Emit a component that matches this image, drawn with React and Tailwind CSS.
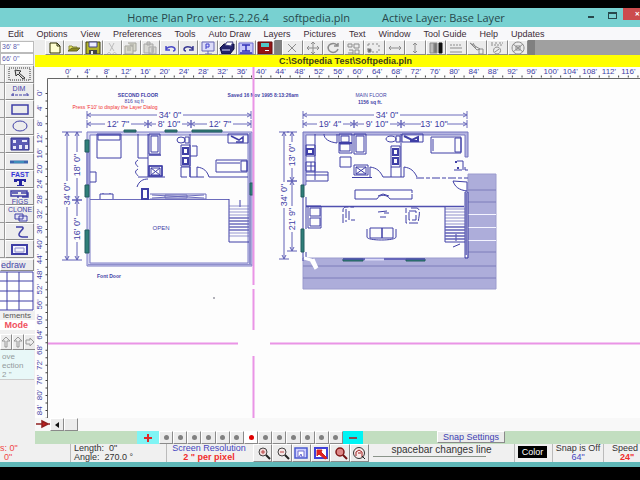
import clsx from 'clsx';

const INK = '#3f3fa6';
const GREEN = '#2f7f78';

const menus = ['Edit', 'Options', 'View', 'Preferences', 'Tools', 'Auto Draw', 'Layers', 'Pictures', 'Text', 'Window', 'Tool Guide', 'Help', 'Updates'];

const range = (n) => Array.from({ length: n }, (_, i) => i);

const fileTools = [
  { name: 'New', art: <path d="M3 2h7l3 3v7H3zM10 2v3h3" fill="#ffffd0" stroke="#333300" /> },
  { name: 'Open', art: <><path d="M3 10V5h3l1 1h4v2" fill="#e8e860" stroke="#8c8c3a" /><path d="M2 10l4-3h8l-3 3z" fill="#8c8c20" stroke="#66662a" /></> },
  { name: 'Save', art: <><path d="M1 1h14v12H1z" fill="#b4b428" stroke="#444410" /><path d="M4 1h8v5H4z" fill="#eeeeff" stroke="#44448a" /><path d="M4 9h8v4H4z" fill="#444" /><path d="M6 10h2v3H6z" fill="#eee" /></> },
  { name: 'Cut', art: <path d="M5 2l5 8M10 2L6 10M5 11.500a1.500 1.500 0 1 0 .1 0M10.500 11.500a1.500 1.500 0 1 0 .1 0" fill="none" stroke="#bcbcbc" /> },
  { name: 'Copy', art: <path d="M2 5h8v8H2zM5 2h8v8h-3M4 7h4M4 9h4M7 4h4" fill="#d8d8cc" stroke="#a4a49c" /> },
  { name: 'Paste', art: <path d="M2 3h9v9H2zM5 1h3v3H5zM7 6h7v7H7zM9 8h3M9 10h3" fill="#d8d8d4" stroke="#a8a8a8" /> },
  { name: 'Undo', art: <path d="M4 5v4h4M4 8c3-3 8-3 9 0 0 1-1 2-2 2" fill="none" stroke="#4a4ac8" strokeWidth="1.500" /> },
  { name: 'Redo', art: <path d="M12 5v4H8M12 8C9 5 4 5 3 8c0 1 1 2 2 2" fill="none" stroke="#3a3a94" strokeWidth="1.500" /> },
  { name: 'Preview', art: <><path d="M2 1h12v9H2zM5 13h7M8 10v3" fill="#dcdcf8" stroke="#6868b4" /><path d="M6 8V3h3v3H6" fill="none" stroke="#3c3ccc" /></> },
  { name: 'Print', art: <><path d="M1 7l4-4h10v5l-4 5H3z" fill="#22226c" stroke="#10103c" /><path d="M6 4l2-3h6l-2 4z" fill="#fff" stroke="#444488" /><path d="M3 9h8" stroke="#d8d8ff" /></> },
  { name: 'Layers', art: <><path d="M1 2h14v11H1z" fill="#c8c8fa" stroke="#6a6ad0" /><path d="M4 4h8M8 4v6M4 10h8M2 12h12" stroke="#3030b8" fill="none" strokeWidth="1.500" /></> },
  { name: 'Exit', art: <><path d="M1 1h14v12H1z" fill="#941414" stroke="#641010" /><path d="M4 2h8v4H4z" fill="#50c8c8" /><path d="M8 9h4v1H8z" fill="#fff" /></> },
];

const editTools = [
  { name: 'Delete', art: <path d="M4 3l8 8M12 3l-8 8" /> },
  { name: 'Move', art: <path d="M8 1v12M2 7h12M6 3l2-2 2 2M6 11l2 2 2-2M4 5L2 7l2 2M12 5l2 2-2 2" /> },
  { name: 'Rotate', art: <path d="M12 4a5 4.500 0 1 0 1 4M13 2v3H9" strokeWidth="1.500" /> },
  { name: 'Resize', art: <path d="M2 3h4v3H2zM8 3h5v4H8zM3 9h4v4M9 9h4v4H9zM2 12h5" /> },
  { name: 'Select', art: <><path d="M2 3h11v8H2z" strokeDasharray="2 2" /><path d="M2 8h3v3H2z" fill="#666" /></> },
  { name: 'Stretch width', art: <path d="M2 7h12M4 5L2 7l2 2M12 5l2 2-2 2" /> },
  { name: 'Stretch height', art: <path d="M8 2v10M6 4l2-2 2 2M6 10l2 2 2-2" /> },
  { name: 'Fill', art: <><path d="M2 2h4v10H2z" fill="#bbb" /><path d="M6 2h3v10H6z" fill="#777" /><path d="M11 2h3v10h-3z" fill="#111" stroke="#111" /></> },
  { name: 'Line style', art: <><path d="M2 4h12" strokeDasharray="2 1" /><path d="M2 7h12M2 11h12" /></> },
  { name: 'Trim', art: <path d="M1 2l5 3 5 3-3 1zM4 2l3 5M10 8h4v5h-4z" /> },
  { name: 'Check', art: <><path d="M2 2h3M6 2h3M10 2h4M2 4h12" strokeDasharray="2 1" /><path d="M8 6a3.500 3.500 0 1 0 .1 0M6 11l4-3" /></> },
  { name: 'Symbols', art: <path d="M8 1a6 6 0 1 0 .1 0M3 3l10 8M13 3L3 11M6 5h4v4H6z" /> },
];

const drawTools = [
  { name: 'Pointer', art: <><path d="M3 2h21v12H3z" fill="none" stroke="#333" strokeDasharray="1 1" /><path d="M9 4l6 1-2 2 6 5-2 1-5-5-2 2z" fill="#ddd" stroke="#333" /></> },
  { name: 'Dimension', art: <><text x="13" y="8" fontSize="7" textAnchor="middle" fill={INK}>DIM</text><path d="M5 12h18M7 10v4M21 10v4" stroke={INK} strokeDasharray="3 1" /></> },
  { name: 'Rectangle', art: <path d="M6 4h16v9H6z" fill="none" stroke={INK} strokeWidth="1.500" /> },
  { name: 'Circle', art: <ellipse cx="14" cy="8" rx="7" ry="5" fill="none" stroke={INK} /> },
  { name: 'Walls', art: <><path d="M5 2h18v12H5z" fill="#5a5ab4" stroke="#30308c" /><path d="M7 4h3v3H7zM16 4h5v2h-5zM7 10h3v3H7zM13 9h3v4h-3zM19 9h3v4h-3z" fill="#e8e8f8" /></> },
  { name: 'Line', art: <><path d="M4 8h18" stroke="#3c64ac" strokeWidth="3" /><path d="M8 8h10" stroke="#40b8c8" /></> },
  { name: 'Fast text', art: <><text x="14" y="6" fontSize="7" fontWeight="bold" textAnchor="middle" fill="#3434d8">FAST</text><path d="M8 8h12v3h-2V10h-2v4h2v1h-7v-1h2v-4h-2v1H8z" fill="#2424a0" /></> },
  { name: 'Figures', art: <><path d="M5 2h16v5H5zM12 7v2M6 4h6M15 4h7v4h-6" fill="none" stroke={INK} strokeWidth="1.500" /><text x="14" y="15" fontSize="7" textAnchor="middle" fill={INK}>FIGS</text></> },
  { name: 'Clone', art: <><text x="14" y="6" fontSize="7" textAnchor="middle" fill={INK}>CLONE</text><path d="M9 8h8v5H9zM13 10h8v5h-8z" fill="#e4e4f4" stroke={INK} /></> },
  { name: 'Curve', art: <path d="M10 3h6c4 1-4 5-3 8 1 3 5 2 9 2" fill="none" stroke={INK} strokeWidth="1.500" /> },
  { name: 'Frame', art: <><path d="M6 4h15v9H6z" fill="#f4f4fc" stroke={INK} strokeWidth="2" /><path d="M9 7h9v4H9z" fill="none" stroke="#8c8ccc" /></> },
];

const zoomTools = [
  { name: 'Zoom in', art: <><circle cx="8" cy="6" r="4" fill="#f0d8d8" stroke="#444" /><path d="M11 9l4 4" stroke="#222" strokeWidth="2" /><path d="M6 6h4M8 4v4" stroke="#b44" /></> },
  { name: 'Zoom out', art: <><circle cx="8" cy="6" r="4" fill="#f4e8e8" stroke="#444" /><path d="M11 9l4 4" stroke="#222" strokeWidth="2" /><path d="M6 6h4" stroke="#b44" /></> },
  { name: 'Zoom page', art: <><path d="M2 2h12v10H2z" fill="#d0d0ff" stroke="#4a5ad0" strokeWidth="1.500" /><path d="M5 5h6v6H9l-1-3-2 3H5z" fill="#fff" stroke="#7070d0" /></> },
  { name: 'Zoom area', art: <><path d="M2 2h12v10H2z" fill="#fff" stroke="#4040d8" strokeWidth="2" /><path d="M4 4h5l-1 2 6 6-2 1-6-5-2 2z" fill="#e02020" stroke="#d02020" /></> },
  { name: 'Zoom previous', art: <><circle cx="8" cy="6" r="4" fill="#d88" stroke="#801818" strokeWidth="1.500" /><path d="M11 9l4 4" stroke="#701010" strokeWidth="2" /></> },
  { name: 'Redraw view', art: <><circle cx="8" cy="7" r="5.500" fill="#f8eaea" stroke="#333" /><path d="M5 10V6l3-2 3 2v5M7 7h3" fill="none" stroke="#a02020" /><path d="M11 10l3 3" stroke="#222" /></> },
];

const bevel = 'border border-t-white border-l-white border-r-[#8a8a8a] border-b-[#8a8a8a] bg-[#ececec]';

const Tool = ({ tool, className, viewBox, art }) => (
  <button aria-label={tool.name} className={clsx('flex items-center justify-center overflow-hidden', bevel, className)}>
    <svg viewBox={viewBox} className={clsx('shrink-0', art)}>{tool.art}</svg>
  </button>
);

const TitleBar = () => (
  <header className="flex h-[19px] items-center bg-[#78d1d1] text-[11px] leading-[18px] whitespace-nowrap text-[#27484c] font-['Open_Sans',sans-serif]">
    <div className="flex-1"></div>
    <h1 className="flex pr-2">
      <span>Home Plan Pro ver: 5.2.26.4</span>
      <span className="ml-3.5">softpedia.pln</span>
      <span className="ml-8">Active Layer: Base Layer</span>
    </h1>
    <div className="flex h-full flex-1 items-start justify-end">
      <button aria-label="Minimize" className="mt-2 mr-3.5 h-0.5 w-1.5 bg-[#28484c]"></button>
      <button aria-label="Maximize" className="mt-1 mr-1.5 h-[7px] w-[9px] border border-t-2 border-[#28484c]"></button>
      <button aria-label="Close" className="flex h-3 w-[17px] justify-end bg-[#cc4c4e] text-[9px] leading-3 font-bold text-white">×</button>
    </div>
  </header>
);

const Dim = ({ x1, x2, y, label, at }) => (
  <g>
    <path d={`M${x1} ${y}H${at - 13}M${at + 13} ${y}H${x2}M${x1} ${y - 4}v8M${x2} ${y - 4}v8M${x1 + 4} ${y - 2}l-4 2 4 2M${x2 - 4} ${y - 2}l4 2-4 2`} stroke="#6c6cbc" />
    <text x={at} y={y + 3} fontSize="9" textAnchor="middle" stroke="none" fill={INK}>{label}</text>
  </g>
);

const VDim = ({ y1, y2, x, label, at }) => (
  <g>
    <path d={`M${x} ${y1}V${at - 13}M${x} ${at + 13}V${y2}M${x - 5} ${y1}h10M${x - 5} ${y2}h10M${x - 2} ${y1 + 4}l2-4 2 4M${x - 2} ${y2 - 4}l2 4 2-4`} stroke="#6060b6" />
    <text transform={`translate(${x + 3} ${at}) rotate(-90)`} fontSize="9" textAnchor="middle" stroke="none" fill={INK}>{label}</text>
  </g>
);

const SecondFloor = () => (
  <g fill="none" stroke={INK} strokeWidth="1">
    <g stroke="none" fill={INK} fontSize="5" textAnchor="middle">
      <text x="138" y="97" fontWeight="bold">SECOND FLOOR</text>
      <text x="134" y="103">816 sq ft</text>
      <text x="115" y="109" fill="#f03030">Press 'F10' to display the Layer Dialog</text>
      <text x="161" y="230" fontSize="6">OPEN</text>
      <text x="109" y="278" fontWeight="bold">Font Door</text>
      <text x="263" y="97" fontWeight="bold">Saved 16 Nov 1995  8:13:26am</text>
    </g>
    <Dim x1={87} x2={251} y={115} at={170} label={`34' 0"`} />
    <Dim x1={87} x2={148} y={124} at={118} label={`12' 7"`} />
    <Dim x1={148} x2={191} y={124} at={169} label={`8' 10"`} />
    <Dim x1={191} x2={251} y={124} at={220} label={`12' 7"`} />
    <VDim x={67} y1={132} y2={260} at={194} label={`34' 0"`} />
    <VDim x={77} y1={132} y2={200} at={165} label={`18' 0"`} />
    <VDim x={77} y1={200} y2={260} at={229} label={`16' 0"`} />
    {/* outer walls */}
    <path d="M87 132h165v134H87zM90 135h158v128H90z" fill="#d4d4f0" fillRule="evenodd" stroke="#7c7cc6" />
    <path d="M249 133h2v132h-2zM88 264h164v1H88z" fill="#9090cc" stroke="none" />
    <path d="M90 199.500h139M89 152h-2v33h2z" stroke="#6c6cbc" />
    <path d="M124 130h12v2h-12zM165 130h12v2h-12zM192 130h30v2h-30zM85 140h4v12h-4zM85 185h4v12h-4zM85 230h4v23h-4zM250 183h3v12h-3z" fill={GREEN} stroke="#245c60" />
    {/* left bedroom */}
    <path d="M97 134h24v24H97zM98 135h22v5H98zM90 172h6v10h-6M138 134v24h10M100 199v-5h13v5M103 194v-1M110 194v-1" />
    <path d="M148 134v43M138 160c-5 3-1 5 0 7M138 169c-5 3-1 5 0 7M138 177h27M137 187c2-6 6-8 11-8" />
    <path d="M142 189h6v10h-6z" strokeWidth="2" />
    <path d="M150 194h56v5h-56M152 195l52 3M152 198l52-3M165 195h22v3h-22z" stroke="#6c6cbc" />
    {/* bath */}
    <path d="M149 134h11v20h-11zM151 136h7v16h-7zM149 166h13v10h-13zM151 168h9v7h-9zM151 168l9 7M160 168l-9 7" />
    <path d="M149 155h12M149 166h13v10h-13z" strokeWidth="1.500" />
    <ellipse cx="181" cy="140" rx="4" ry="3" />
    <path d="M185 137h4v6h-4zM181 145h9v21h-9zM181 167h9v10h14M181 167v10h6M190 134v43" />
    <path d="M183 148h5v6h-5zM183 158h5v6h-5z" strokeWidth="2" />
    <path d="M192 146h5v10h-7M197 177v-10c7 1 10 4 12 10h39" />
    {/* right bedroom */}
    <path d="M216 160h31v12h-31zM241 161h6v10h-6zM217 163h23M228 134h20v9h-20z" />
    <path d="M231 136l8 4 4-3v5h-7" strokeWidth="1.500" />
    {/* stairs */}
    <path d="M229 199v43h20M240 200v7" />
    {range(11).map((i) => <path key={i} d={`M229 ${206 + i * 3}h20`} stroke="#6c6cbc" strokeWidth={i > 3 && i < 9 ? 1.5 : 0.7} />)}
  </g>
);

const MainFloor = () => (
  <g fill="none" stroke={INK} strokeWidth="1">
    <g stroke="none" fill={INK} fontSize="5" textAnchor="middle">
      <text x="371" y="97">MAIN FLOOR</text>
      <text x="370" y="104" fontWeight="bold">1156 sq ft.</text>
    </g>
    <Dim x1={303} x2={467} y={115} at={387} label={`34' 0"`} />
    <Dim x1={303} x2={354} y={124} at={330} label={`19' 4"`} />
    <Dim x1={354} x2={401} y={124} at={377} label={`9' 10"`} />
    <Dim x1={401} x2={467} y={124} at={434} label={`13' 10"`} />
    <VDim x={284} y1={132} y2={259} at={195} label={`34' 0"`} />
    <VDim x={292} y1={132} y2={181} at={155} label={`13' 0"`} />
    <VDim x={292} y1={181} y2={251} at={219} label={`21' 9"`} />
    {/* deck */}
    <path d="M468 174h28v115H303v-31h165z" fill="#adadda" stroke="#9c9cce" />
    <path d="M468 190h28M468 202h28M468 252h28M303 266h193M303 278h193" stroke="#7c7cba" />
    <path d="M468 214.500h28M468 227.500h28M468 240.500h28" stroke="#f4f4ff" />
    {/* outer walls */}
    <path d="M303 132h165v25h-3v-22H306v50h-3z" fill="#b4b4e0" stroke="#7474c0" />
    <path d="M303 197v32M306 197v32M303 252v9M306 252v5M465 167v3h3M465 192h3v66h-3z" />
    <path d="M465 193h2v62h-2z" fill="#7878c0" stroke="none" />
    <path d="M301 185h3v12h-3zM301 229h3v23h-3zM343 259h20v2h-20zM406 259h19v2h-19z" fill={GREEN} stroke="#245c60" />
    <path d="M343 259h82M306 206.500h158" stroke="#5050b0" strokeWidth="1.500" />
    <path d="M365 259.500h19" stroke="#dadaf8" strokeWidth="2" />
    <path d="M304 258l7 2 5 9M313 259l4 9" stroke="#fff" strokeWidth="3" />
    {/* kitchen */}
    <path d="M315 134v46M306 145h9v11h-9zM306 162h9v9h-9zM307 166h8M311 162v9M306 172h22v9h-22M306 175h22M324 134c0 5 5 8 13 9v-9M339 134h13v19h-13zM341 136h8v6h-8zM340 144h10v7h-10zM340 157h11v10h-11z" />
    <path d="M307 149h6v5h-6zM339 143h13" strokeWidth="2" />
    {/* bath */}
    <path d="M354 134h12v20h-12zM356 136h8v16h-8zM354 165h14v10h-14zM356 167h10v7h-10zM356 167l10 7M366 167l-10 7" />
    <path d="M352 177.500h20M370 177v-10c7 1 10 4 13 10h21v-10c7 1 10 4 13 10" />
    <path d="M416 178h52" strokeDasharray="8 2 4 2" />
    <ellipse cx="391" cy="139" rx="5" ry="3" />
    <path d="M396 136h4v6h-4zM391 146h9v21h-9zM391 167v10M401 134v43" />
    <path d="M393 149h5v6h-5zM393 158h5v6h-5z" strokeWidth="2" />
    {/* bedroom */}
    <path d="M402 134h21v8h-21zM431 137h30v16h-30zM455 138h6v14h-6zM433 139v12M454 170h8M457 161h6v9" />
    <path d="M404 136l8 4 6-3v4h-8M457 162h-2M458 169v-2" strokeWidth="2" />
    <path d="M453 181c2 6 6 9 14 10v-9z" fill="#fff" />
    {/* island, seating */}
    <path d="M355 190h57v3M355 190v9h22c2-5 10-5 13 0h22v-5M378 196l5-2 6 2" />
    <path d="M306 206h15v22h-13v-22M310 208h10v8h-10zM310 218h10v8h-10z" />
    <path d="M343 223v-13c0-3 3-3 5-3h6M346 209v13M349 211v9h6M411 208h6c4 1 2 8 1 15h-12v-15M409 211h7v9h-7z" strokeDasharray="9 2" />
    <path d="M378 212l9-1M380 217h6M384 213h5M367 229v8c0 4 29 4 29 0v-8M370 228h12v10h-12zM382 228h11v10h-11z" />
    <path d="M445 207v35h20M456 234v7" />
    {range(11).map((i) => <path key={i} d={`M445 ${209 + i * 3}h20`} stroke="#6060b6" strokeWidth={i > 5 ? 1.5 : 0.7} />)}
    <path d="M453 247l7-3" />
  </g>
);

const Canvas = () => (
  <svg role="img" aria-label="Floor plan" className="block min-h-[320px] w-full flex-1 bg-[#fdfdfd]">
    <g transform="translate(-35 -67)">
      <path d="M47.500 419V78.500H2000" fill="none" stroke="#666" />
      <path d="M67.500 76.500H2000" stroke="#444" strokeWidth="2" strokeDasharray="1 8.660" />
      <path d="M46.500 93V419" stroke="#444" strokeWidth="2" strokeDasharray="1 6.550" />
      <g fill={INK} fontSize="8" textAnchor="middle">
        {range(30).map((i) => <text key={i} x={68 + i * 19.32} y="74">{i * 4}'</text>)}
        {range(22).map((i) => (
          <text key={i} transform={`translate(42 ${93 + i * 15.1}) rotate(-90)`}>{i * 4}'</text>
        ))}
      </g>
      <SecondFloor />
      <MainFloor />
      <g stroke="#ea94e6" strokeWidth="2">
        <path d="M253.500 67v218M253.500 289v41M253.500 356v62M48 343.500h190M270 343.500h1800" />
      </g>
      <path d="M214 297v2" stroke="#667" />
    </g>
  </svg>
);

const SidePanel = () => (
  <aside className="flex w-[35px] shrink-0 flex-col bg-[#f0f0f0] text-[8px] whitespace-nowrap">
    <input aria-label="Width" defaultValue={`36' 8"`} className="mt-px h-3 w-[34px] border border-[#bbb] bg-white px-px text-[7px] leading-3 text-[#5c5cb0]" />
    <input aria-label="Height" defaultValue={`66' 0"`} className="h-3 w-[34px] border border-[#bbb] bg-white px-px text-[7px] leading-3 text-[#5c5cb0]" />
    <div className="flex h-[193px] flex-col">
      {drawTools.map((tool) => (
        <div key={tool.name} className="flex min-h-0 flex-1">
          <div className="w-[5px] border-r border-b border-[#999]"></div>
          <Tool tool={tool} viewBox="0 0 28 16" className="w-[29px]" art="h-4 w-7" />
        </div>
      ))}
    </div>
    <button className={clsx('mt-px h-3 w-[34px] pr-2 text-right text-[9px] leading-[10px] text-[#4646a8]', bevel)}>edraw</button>
    <svg viewBox="0 0 34 40" className="h-10 w-[34px]">
      <path d="M0 0h34v40H0z" fill="#fff" />
      <path d="M0 1h33v38H0M7 1v38M19 1v38M0 10h33M0 20h33M0 30h33" fill="none" stroke={INK} />
    </svg>
    <p className="h-[9px] pr-1 text-right leading-[9px] text-[#555]">lements</p>
    <p className="h-[10px] bg-white pr-[7px] text-right text-[9px] leading-[10px] font-bold text-[#f05060]">Mode</p>
    <div className="mt-1 flex h-4">
      {range(3).map((i) => (
        <button key={i} aria-label={`Nudge ${i + 1}`} className={clsx('flex flex-1 items-center justify-center', bevel)}>
          <svg viewBox="0 0 10 12" className="h-3 w-2.5">
            <path d={i === 2 ? 'M1 4h4V2l4 4-4 4V8H1z' : 'M5 1l4 4H6v6H4V5H1z'} fill="none" stroke="#999" />
          </svg>
        </button>
      ))}
    </div>
    <div className="h-[30px] w-[34px] border-b border-[#ccc] bg-[#e8f8f8] pt-0.5 text-[8px] leading-[9px] text-[#929a9c]">
      <p className="pl-0.5">ove</p>
      <p className="pl-0.5">ection</p>
      <p className="pl-0.5">2 "</p>
    </div>
  </aside>
);

const ScrollRow = () => (
  <div className="flex h-[13px] bg-[#f8f8f8]">
    <svg viewBox="0 0 15 12" className="h-3 w-[15px]">
      <path d="M1 6h6M7 3l6 3-6 3zM13 6h2" fill="#c42020" stroke="#902020" strokeWidth="1.500" />
    </svg>
    <button aria-label="Scroll left" className={clsx('flex w-3.5 items-center justify-center', bevel)}>
      <svg viewBox="0 0 4 6" className="h-1.5 w-1"><path d="M4 0v6L0 3z" fill="#111" /></svg>
    </button>
    <button aria-label="Scroll thumb" className={clsx('w-3.5', bevel)}></button>
  </div>
);

const LayerRow = () => (
  <div className="flex h-[13px] bg-[#c2dec0]">
    <button aria-label="Add layer" className="ml-[102px] flex w-[22px] shrink-0 items-center justify-center bg-[#80f4f4]">
      <svg viewBox="0 0 10 8" className="h-2 w-2.5"><path d="M1 4h8M5 0v8" stroke="#e02828" strokeWidth="2" /></svg>
    </button>
    <div className="flex w-[184px] shrink-0">
      {range(13).map((i) => (
        <button key={i} aria-label={`Layer ${i + 1}`} className={clsx('flex flex-1 items-center justify-center', bevel, i === 6 && 'bg-white')}>
          <span className={clsx('size-[5px] rounded-full', i === 6 ? 'bg-[#e00000]' : 'bg-[#808080]')}></span>
        </button>
      ))}
    </div>
    <button aria-label="Remove layer" className="flex w-5 shrink-0 items-center justify-center bg-[#00f4f4]">
      <svg viewBox="0 0 10 4" className="h-1 w-2.5"><path d="M1 2h8" stroke="#8c4850" strokeWidth="2" /></svg>
    </button>
    <button className={clsx('ml-[74px] h-3 w-[68px] shrink-0 text-[9px] leading-[10px] whitespace-nowrap text-[#4040b4]', bevel)}>Snap Settings</button>
  </div>
);

const StatusBar = () => (
  <footer className="flex h-[18px] bg-[#f0f0f0] text-[9px] leading-[9px] whitespace-nowrap text-[#333]">
    <div className="w-[71px] shrink-0 border-r border-[#bbb] text-[#f04848]">
      <p>s: 0"</p>
      <p className="pl-1">0"</p>
    </div>
    <div className="w-[96px] shrink-0 border-r border-[#bbb] pl-[3px]">
      <p>Length:&nbsp; 0"</p>
      <p>Angle:&nbsp; 270.0 °</p>
    </div>
    <div className="w-[84px] shrink-0 text-center">
      <p className="text-[#4646c0]">Screen Resolution</p>
      <p className="font-bold text-[#f02c2c]">2 " per pixel</p>
    </div>
    <div className="flex w-[118px] shrink-0 pl-0.5">
      {zoomTools.map((tool) => (
        <Tool key={tool.name} tool={tool} viewBox="0 0 16 14" className="flex-1" art="h-3.5 w-4" />
      ))}
    </div>
    <div className="w-[146px] shrink-0 border-r border-[#bbb] px-1 text-center">
      <p className="text-[10px] leading-3">spacebar changes line</p>
      <div className="mr-6 border-b border-[#8a948a]"></div>
    </div>
    <button className="mt-0.5 ml-[3px] h-3 w-[29px] shrink-0 bg-black leading-3 text-white">Color</button>
    <div className="ml-[5px] w-[52px] shrink-0 border-x border-[#bbb] text-center">
      <p>Snap is Off</p>
      <p className="text-[#4646c0]">64"</p>
    </div>
    <div className="ml-1 flex-1 pl-1">
      <p>Speed</p>
      <p className="pl-2 font-bold text-[#f02c2c]">24"</p>
    </div>
  </footer>
);

const App = () => (
  <div className="flex min-h-screen flex-col overflow-hidden bg-black pt-2 pb-[13px] font-['Liberation_Sans',sans-serif]">
    <TitleBar />
    <nav className="flex h-[13px] gap-[13px] bg-[#f8f8fa] pl-2 text-[9px] leading-3 whitespace-nowrap text-[#3c2c38]">
      {menus.map((menu) => <button key={menu}>{menu}</button>)}
    </nav>
    <main className="flex flex-1 bg-[#f0f0f0]">
      <SidePanel />
      <section className="flex min-w-0 flex-1 flex-col">
        <div className="flex h-[15px] bg-[#a0a0a0]">
          <div className="w-2.5 shrink-0 bg-[#ececec]"></div>
          <div className="flex w-[230px] shrink-0">
            {fileTools.map((tool) => (
              <Tool key={tool.name} tool={tool} viewBox="0 0 16 14" className="flex-1" art="h-3.5 w-4" />
            ))}
          </div>
          <div className="w-[7px] shrink-0 bg-[#808080]"></div>
          <div className="flex w-[246px] shrink-0 fill-none stroke-[#8c8c8c]">
            {editTools.map((tool) => (
              <Tool key={tool.name} tool={tool} viewBox="0 0 16 14" className="flex-1" art="h-3.5 w-4" />
            ))}
          </div>
          <div className="w-[7px] shrink-0 bg-[#808080]"></div>
        </div>
        <p className="h-3 bg-[#ffff00] pl-4 text-center text-[9px] leading-3 font-bold text-[#3c3c18]">C:\Softpedia Test\Softpedia.pln</p>
        <Canvas />
        <ScrollRow />
        <LayerRow />
      </section>
    </main>
    <StatusBar />
    <div className="h-[5px] bg-[#60b8b8]"></div>
  </div>
);

export default App;
